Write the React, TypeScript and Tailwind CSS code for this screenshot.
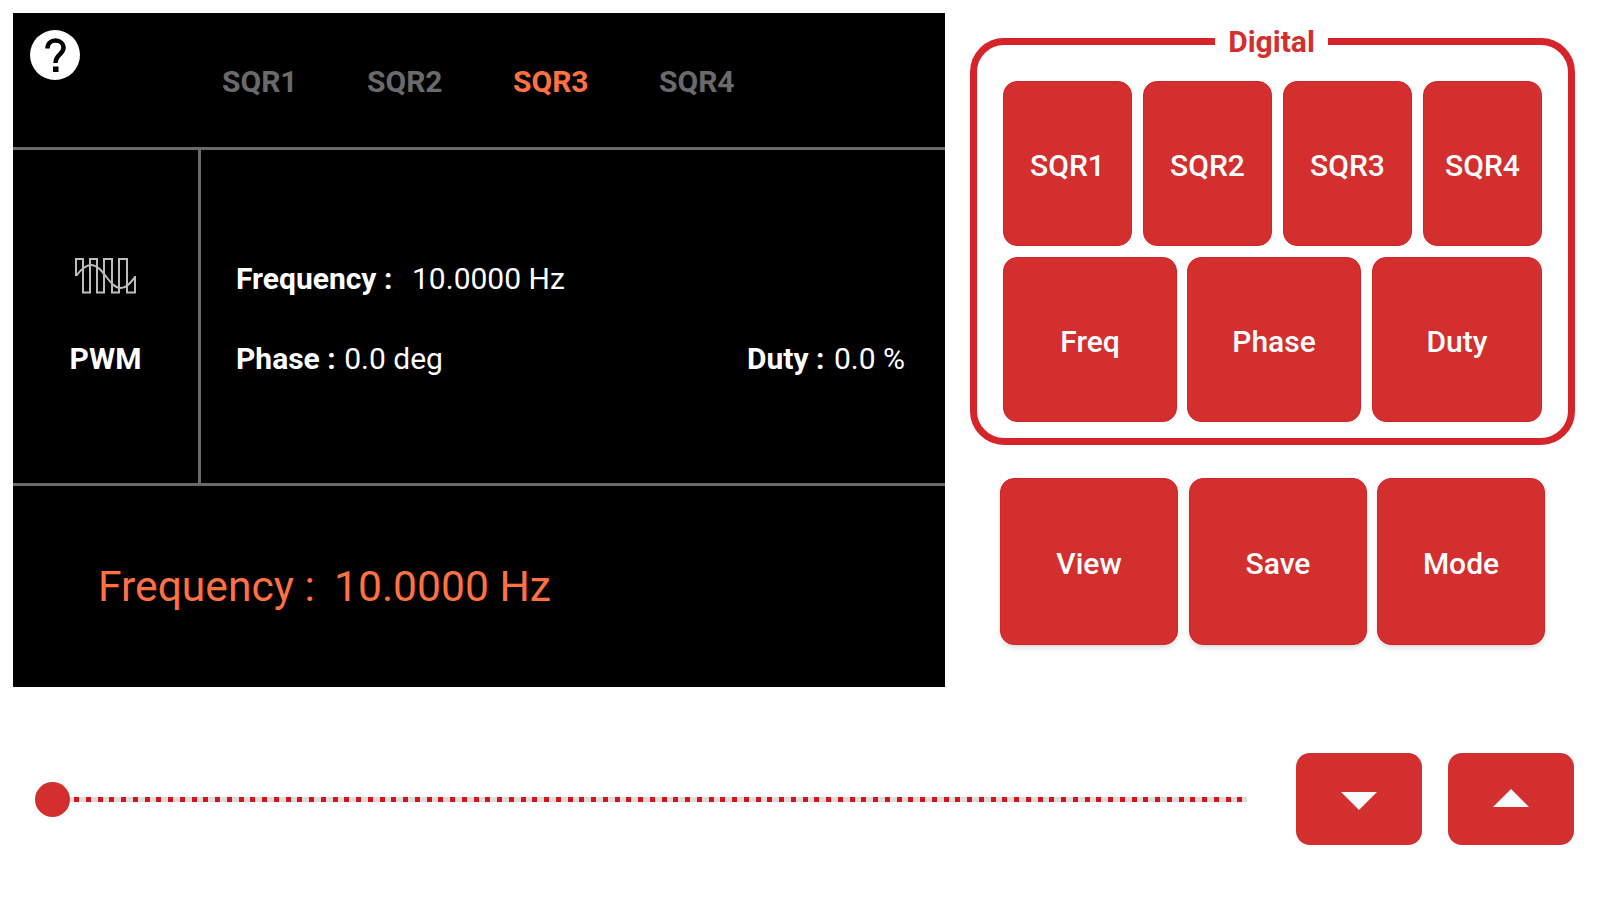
import React from "react";

const Btn = ({ label, className }: { label: string; className: string }) => (
  <button className={`flex items-center justify-center rounded-[14px] bg-[#d32f2f] border border-[#d5242a] pt-[4px] text-white text-[30px] font-medium font-['Roboto',sans-serif] ${className}`}>
    {label}
  </button>
);

export default function App() {
  return (
    <div className="w-[1600px] h-[900px] bg-white overflow-hidden font-['Roboto',sans-serif] flex flex-col">
      <div className="flex h-[700px] pt-[13px] pl-[13px]">
        <div className="w-[932px] h-[674px] bg-black flex flex-col relative">
          <div className="absolute left-[17px] top-[17px] w-[50px] h-[50px] rounded-full bg-white">
            <svg width="50" height="50" viewBox="0 0 50 50" fill="none">
              <path d="M17.5 18.5 C17.5 13.5 21 10.5 25.5 10.5 C30 10.5 33.5 13.5 33.5 18 C33.5 24 25.5 24.5 25.5 33" stroke="#000" strokeWidth="4.5" />
              <rect x="23" y="36.5" width="5.5" height="5.5" fill="#000" />
            </svg>
          </div>
          <div className="h-[131px] flex items-center pl-[209px] pt-[3px] text-[30px] font-bold text-[#6a6a6a] border-b-[3px] border-[#6a6a6a] box-content">
            <span className="w-[145px]">SQR1</span>
            <span className="w-[146px]">SQR2</span>
            <span className="w-[146px] text-[#ff7043]">SQR3</span>
            <span>SQR4</span>
          </div>
          <div className="h-[333px] flex border-b-[3px] border-[#6a6a6a] box-content">
            <div className="w-[185px] border-r-[3px] border-[#6a6a6a] flex flex-col items-center pt-[108px] text-white box-content">
              <svg width="62" height="36" viewBox="0 0 62 36" fill="none" stroke="#bdbdbd" strokeWidth="2">
                <path d="M1 18 V1 H8 V34.5 H15 V1 H22 V34.5 H29 V1 H37 V34.5 H44 V1 H52 V34.5 H60 V18" />
                <path d="M1 18 C7 10 11 7 16 7 C28 7 34 30 46 30 C52 30 56 24 60 19" />
              </svg>
              <div className="mt-[45px] text-[30px] font-bold leading-[40px]">PWM</div>
            </div>
            <div className="flex-1 pl-[35px] pr-[40px] pt-[109px] text-white text-[30px]">
              <div className="h-[40px] leading-[40px] flex">
                <span className="font-bold w-[176px]">Frequency :</span>
                <span className="font-normal">10.0000 Hz</span>
              </div>
              <div className="mt-[40px] h-[40px] leading-[40px] flex justify-between">
                <span><span className="font-bold">Phase : </span><span className="font-normal ml-[1px]">0.0 deg</span></span>
                <span><span className="font-bold">Duty : </span><span className="font-normal ml-[2px]">0.0 %</span></span>
              </div>
            </div>
          </div>
          <div className="flex-1 flex items-center pl-[85px] text-[#ff7043] text-[42.6px] leading-none">
            <span className="w-[236px]">Frequency :</span>
            <span>10.0000 Hz</span>
          </div>
        </div>
        <div className="w-[630px] ml-[25px] pt-[25px]">
          <div className="relative w-[605px] h-[407px] border-[7px] border-[#d5242a] rounded-[34px] pt-[36px] pl-[26px] pr-[26px]">
            <div className="absolute left-[238px] -top-[24px] w-[113px] h-[40px] bg-white flex items-center justify-center text-[#d32f2f] text-[30px] font-bold">Digital</div>
            <div className="flex gap-[11px]">
              <Btn label="SQR1" className="w-[129px] h-[165px]" />
              <Btn label="SQR2" className="w-[129px] h-[165px]" />
              <Btn label="SQR3" className="w-[129px] h-[165px]" />
              <Btn label="SQR4" className="w-[119px] h-[165px]" />
            </div>
            <div className="flex mt-[11px]">
              <Btn label="Freq" className="w-[174px] h-[165px]" />
              <Btn label="Phase" className="ml-[10px] w-[174px] h-[165px]" />
              <Btn label="Duty" className="ml-[11px] w-[170px] h-[165px]" />
            </div>
          </div>
          <div className="flex ml-[30px] mt-[33px]">
            <Btn label="View" className="w-[178px] h-[167px] shadow-md" />
            <Btn label="Save" className="ml-[11px] w-[178px] h-[167px] shadow-md" />
            <Btn label="Mode" className="ml-[10px] w-[168px] h-[167px] shadow-md" />
          </div>
        </div>
      </div>
      <div className="flex items-center h-[92px] mt-[53px] pl-[35px]">
        <div className="w-[35px] h-[35px] rounded-full bg-[#d32f2f]" />
        <div className="w-[1177px] h-[5px] bg-[repeating-linear-gradient(90deg,#dddddd_0_4px,#d4141a_4px_9px,#dddddd_9px_11.75px)]" />
        <button className="ml-[49px] w-[126px] h-[92px] rounded-[14px] bg-[#d32f2f] flex items-center justify-center">
          <svg className="mt-[3px]" width="36" height="18" viewBox="0 0 36 18"><path d="M0 0 H36 L18 18 Z" fill="#f8fafc" /></svg>
        </button>
        <button className="ml-[26px] w-[126px] h-[92px] rounded-[14px] bg-[#d32f2f] flex items-center justify-center">
          <svg className="mt-[-3px]" width="36" height="18" viewBox="0 0 36 18"><path d="M0 18 H36 L18 0 Z" fill="#f8fafc" /></svg>
        </button>
      </div>
    </div>
  );
}
